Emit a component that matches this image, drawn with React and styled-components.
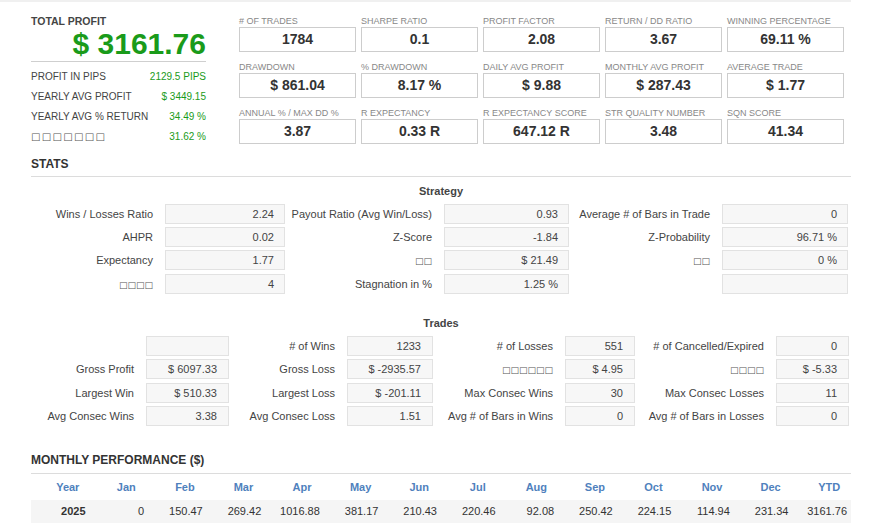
import React from "react";
import styled, { createGlobalStyle } from "styled-components";

const GlobalStyle = createGlobalStyle`
  html, body { margin: 0; padding: 0; background: #fff; }
  body { font-family: "Liberation Sans", Arial, sans-serif; color: #444; }
`;

const GREEN = "#1a9b1a";

const Page = styled.div`
  border-top: 2px solid #f0f0f0;
  padding: 0 0 0 31px;
  width: 820px;
`;

const Top = styled.div`
  display: flex;
  align-items: flex-start;
  gap: 33px;
  padding-top: 13px;
`;

const LeftPanel = styled.div`
  width: 175px;
`;

const TotalLabel = styled.div`
  font-size: 10.5px;
  font-weight: bold;
  line-height: 12px;
  color: #454545;
`;

const BigValue = styled.div`
  font-size: 30px;
  font-weight: bold;
  line-height: 34px;
  text-align: right;
  color: ${GREEN};
  border-bottom: 1px solid #cfcfcf;
  margin-bottom: 5px;
`;

const SummaryRow = styled.div`
  display: flex;
  justify-content: space-between;
  font-size: 10px;
  line-height: 20px;
  color: #444;
`;

const SummaryValue = styled.span`
  color: ${GREEN};
`;

const StatGrid = styled.div`
  display: grid;
  grid-template-columns: repeat(5, 117px);
  column-gap: 5px;
  row-gap: 9px;
`;

const StatCell = styled.div`
  display: flex;
  flex-direction: column;
`;

const StatLabel = styled.div`
  font-size: 9px;
  line-height: 12px;
  color: #888;
  white-space: nowrap;
`;

const StatBox = styled.div`
  box-sizing: border-box;
  height: 25px;
  border: 1px solid #cdcdcd;
  text-align: center;
  font-size: 14px;
  font-weight: bold;
  line-height: 23px;
  color: #333;
`;

const SectionTitle = styled.div`
  margin-top: ${(p) => p.$mt}px;
  font-size: 12px;
  font-weight: bold;
  line-height: 16px;
  padding-bottom: ${(p) => p.$pb || 4}px;
  border-bottom: 1px solid #dcdcdc;
  color: #333;
`;

const SubTitle = styled.div`
  margin-top: ${(p) => p.$mt}px;
  margin-bottom: 6px;
  text-align: center;
  font-size: 11px;
  font-weight: bold;
  line-height: 14px;
  color: #444;
`;

const DataGrid = styled.div`
  display: grid;
  grid-template-columns: ${(p) => p.$cols};
  row-gap: 3px;
`;

const DataLabel = styled.div`
  font-size: 11px;
  line-height: 20px;
  text-align: right;
  padding-right: 12px;
  white-space: nowrap;
  color: #444;
`;

const DataBox = styled.div`
  box-sizing: border-box;
  height: 20px;
  border: 1px solid #e2e2e2;
  background: #f7f7f7;
  font-size: 11px;
  line-height: 18px;
  text-align: right;
  padding-right: ${(p) => p.$pr || 10}px;
  color: #444;
  white-space: nowrap;
`;

const MonthGrid = styled.div`
  display: grid;
  grid-template-columns: repeat(14, 1fr);
`;

const MonthHead = styled.div`
  font-size: 11px;
  font-weight: bold;
  line-height: 26px;
  color: #4f81bd;
  text-align: center;
  padding-left: 15px;
`;

const MonthCell = styled.div`
  font-size: 11px;
  font-weight: ${(p) => (p.$bold ? "bold" : "normal")};
  line-height: 23px;
  padding-bottom: 2px;
  background: #f5f5f5;
  text-align: right;
  padding-right: 4px;
  color: #333;
`;

const Tofu = styled.span`
  font-family: "DejaVu Sans", sans-serif;
  font-size: ${(p) => (p.$big ? 10 : 9)}px;
  letter-spacing: ${(p) => (p.$big ? 1.3 : 0)}px;
  color: #555;
`;

const tofu = (n, big) => <Tofu $big={big}>{"□".repeat(n)}</Tofu>;

const stats = [
  ["# OF TRADES", "1784"],
  ["SHARPE RATIO", "0.1"],
  ["PROFIT FACTOR", "2.08"],
  ["RETURN / DD RATIO", "3.67"],
  ["WINNING PERCENTAGE", "69.11 %"],
  ["DRAWDOWN", "$ 861.04"],
  ["% DRAWDOWN", "8.17 %"],
  ["DAILY AVG PROFIT", "$ 9.88"],
  ["MONTHLY AVG PROFIT", "$ 287.43"],
  ["AVERAGE TRADE", "$ 1.77"],
  ["ANNUAL % / MAX DD %", "3.87"],
  ["R EXPECTANCY", "0.33 R"],
  ["R EXPECTANCY SCORE", "647.12 R"],
  ["STR QUALITY NUMBER", "3.48"],
  ["SQN SCORE", "41.34"],
];

const strategy = [
  ["Wins / Losses Ratio", "2.24", "Payout Ratio (Avg Win/Loss)", "0.93", "Average # of Bars in Trade", "0"],
  ["AHPR", "0.02", "Z-Score", "-1.84", "Z-Probability", "96.71 %"],
  ["Expectancy", "1.77", tofu(2), "$ 21.49", tofu(2), "0 %"],
  [tofu(4), "4", "Stagnation in %", "1.25 %", "", ""],
];

const trades = [
  ["", "", "# of Wins", "1233", "# of Losses", "551", "# of Cancelled/Expired", "0"],
  ["Gross Profit", "$ 6097.33", "Gross Loss", "$ -2935.57", tofu(6), "$ 4.95", tofu(4), "$ -5.33"],
  ["Largest Win", "$ 510.33", "Largest Loss", "$ -201.11", "Max Consec Wins", "30", "Max Consec Losses", "11"],
  ["Avg Consec Wins", "3.38", "Avg Consec Loss", "1.51", "Avg # of Bars in Wins", "0", "Avg # of Bars in Losses", "0"],
];

const months = ["Year", "Jan", "Feb", "Mar", "Apr", "May", "Jun", "Jul", "Aug", "Sep", "Oct", "Nov", "Dec", "YTD"];
const monthVals = ["2025", "0", "150.47", "269.42", "1016.88", "381.17", "210.43", "220.46", "92.08", "250.42", "224.15", "114.94", "231.34", "3161.76"];

export default function App() {
  return (
    <>
      <GlobalStyle />
      <Page>
        <Top>
          <LeftPanel>
            <TotalLabel>TOTAL PROFIT</TotalLabel>
            <BigValue>$ 3161.76</BigValue>
            <SummaryRow><span>PROFIT IN PIPS</span><SummaryValue>2129.5 PIPS</SummaryValue></SummaryRow>
            <SummaryRow><span>YEARLY AVG PROFIT</span><SummaryValue>$ 3449.15</SummaryValue></SummaryRow>
            <SummaryRow><span>YEARLY AVG % RETURN</span><SummaryValue>34.49 %</SummaryValue></SummaryRow>
            <SummaryRow><span>{tofu(7, true)}</span><SummaryValue>31.62 %</SummaryValue></SummaryRow>
          </LeftPanel>
          <StatGrid>
            {stats.map(([l, v]) => (
              <StatCell key={l}>
                <StatLabel>{l}</StatLabel>
                <StatBox>{v}</StatBox>
              </StatCell>
            ))}
          </StatGrid>
        </Top>

        <SectionTitle $mt={9}>STATS</SectionTitle>

        <SubTitle $mt={7}>Strategy</SubTitle>
        <DataGrid $cols="134px 120px 159px 125px 153px 126px">
          {strategy.map((row, i) =>
            row.map((c, j) =>
              j % 2 === 0 ? (
                <DataLabel key={`${i}-${j}`}>{c}</DataLabel>
              ) : (
                <DataBox key={`${i}-${j}`}>{c}</DataBox>
              )
            )
          )}
        </DataGrid>

        <SubTitle $mt={21}>Trades</SubTitle>
        <DataGrid $cols="115px 83px 118px 86px 132px 70px 141px 73px">
          {trades.map((row, i) =>
            row.map((c, j) =>
              j % 2 === 0 ? (
                <DataLabel key={`${i}-${j}`}>{c}</DataLabel>
              ) : (
                <DataBox key={`${i}-${j}`} $pr={11}>{c}</DataBox>
              )
            )
          )}
        </DataGrid>

        <SectionTitle $mt={26} $pb={5}>MONTHLY PERFORMANCE ($)</SectionTitle>
        <MonthGrid>
          {months.map((m) => (
            <MonthHead key={m}>{m}</MonthHead>
          ))}
          {monthVals.map((v, i) => (
            <MonthCell key={i} $bold={i === 0}>{v}</MonthCell>
          ))}
        </MonthGrid>
      </Page>
    </>
  );
}
